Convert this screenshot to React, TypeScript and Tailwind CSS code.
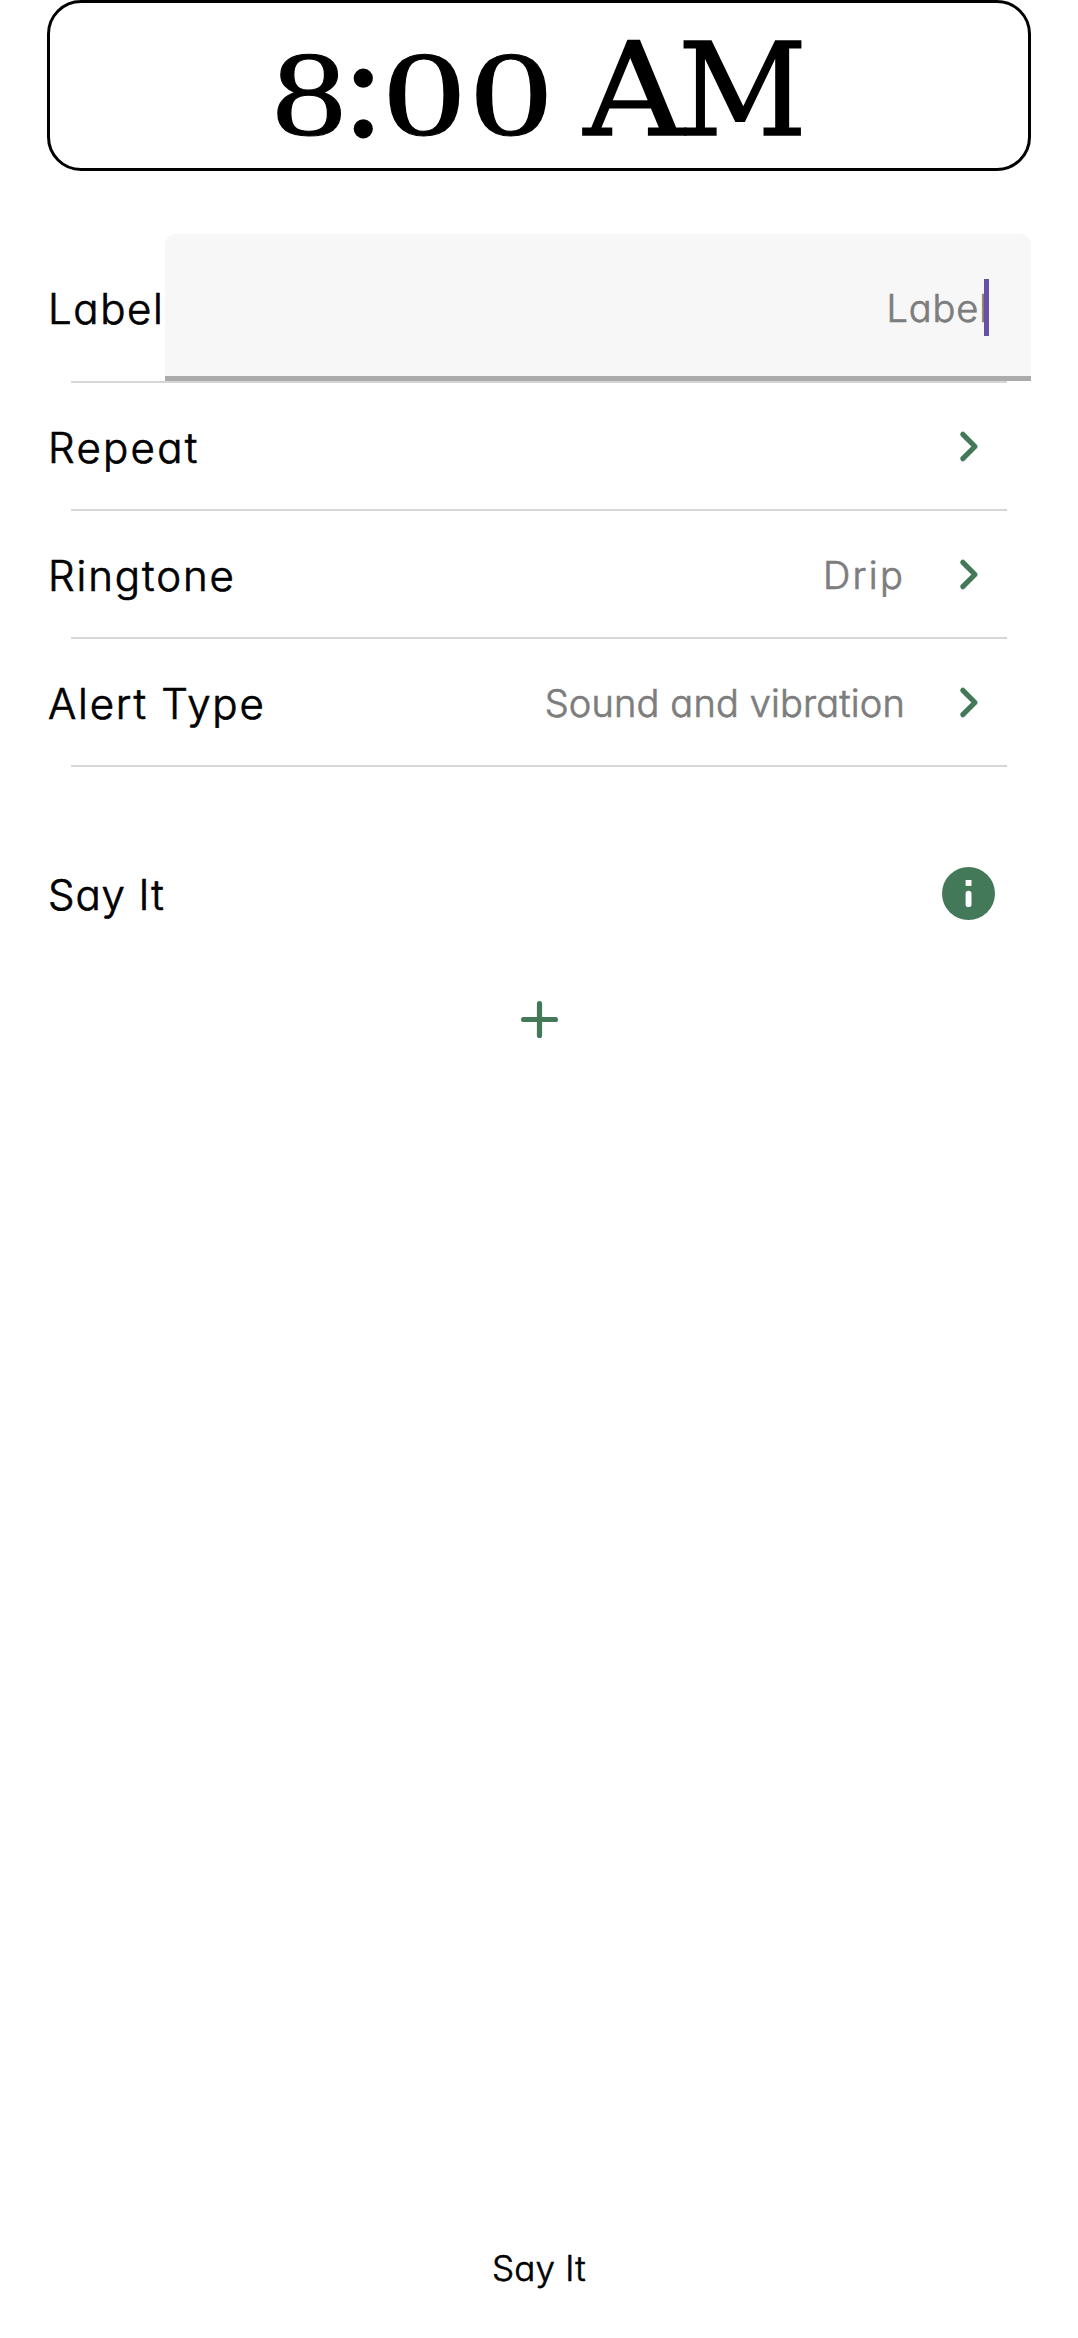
import React from "react";

const outfit = "font-[Inter,sans-serif] leading-none whitespace-nowrap font-light [font-feature-settings:'cv11','ss03']";
const labelText = `${outfit} text-[42px] text-black [-webkit-text-stroke:0.7px_black]`;
const valueText = `${outfit} text-[38px] text-[#7d7d7d] [-webkit-text-stroke:0.7px_#7d7d7d]`;

function Chevron() {
  return (
    <svg className="shrink-0" width="72" height="72" viewBox="0 0 72 72" fill="none" stroke="#437858" strokeWidth="5.2" strokeLinecap="round" strokeLinejoin="round">
      <path d="M30.8 24.3L43 36.5L30.8 48.7" />
    </svg>
  );
}

function Divider() {
  return <div className="mx-6 h-[2px] shrink-0 bg-[#d6d6d6]" />;
}

function Row({ name, spacing, value, valueSpacing = "" }: { name: string; spacing: string; value?: string; valueSpacing?: string }) {
  return (
    <div className="flex h-[128px] flex-col">
      <div className="flex flex-1 items-center pr-[27px] pl-[1px]">
        <span className={`${labelText} ${spacing} pt-[3px]`}>{name}</span>
        <span className={`${valueText} ${valueSpacing} mr-[27px] ml-auto pt-[2px]`}>{value}</span>
        <Chevron />
      </div>
      <Divider />
    </div>
  );
}

function Glyph({ cell, face, children }: { cell: string; face: string; children: string }) {
  return (
    <span className={`flex justify-center leading-[150px] ${cell}`}>
      <span className={`inline-block ${face}`}>{children}</span>
    </span>
  );
}

const digit = "font-['Liberation_Serif',serif] text-[121px] [-webkit-text-stroke:1px_black]";
const letter = "font-['DejaVu_Serif',serif] text-[130px] [-webkit-text-stroke:1.5px_black] [stroke-linejoin:round]";

export default function App() {
  return (
    <div className="flex h-[2338px] w-[1078px] flex-col bg-white px-[47px]">
      <div className="flex h-[171px] shrink-0 items-baseline rounded-[34px] border-3 border-black pt-[11px] pl-[227px] text-black">
        <Glyph cell="w-[65px]" face={`${digit} scale-x-[1.22]`}>8</Glyph>
        <Glyph cell="w-[43px]" face="font-['Liberation_Serif',serif] text-[138px] [-webkit-text-stroke:3px_black]">:</Glyph>
        <Glyph cell="w-[78px]" face={`${digit} scale-x-[1.34]`}>0</Glyph>
        <Glyph cell="w-[96px]" face={`${digit} scale-x-[1.34]`}>0</Glyph>
        <Glyph cell="w-[102px] ml-[24px]" face={`${letter} scale-x-[1.07]`}>A</Glyph>
        <Glyph cell="w-[115px]" face={`${letter} scale-x-[0.97]`}>M</Glyph>
      </div>

      <div className="mt-[63px] flex h-[147px] shrink-0">
        <div className="flex w-[118px] items-center pl-[1px]">
          <span className={`${labelText} pt-[2px] tracking-[1.6px]`}>Label</span>
        </div>
        <div className="flex flex-1 items-center justify-end rounded-t-[11px] border-b-[5px] border-[#ababab] bg-[#f7f7f7] pr-[42px]">
          <span className={`${valueText} pt-[5px] tracking-[0.9px]`}>Label</span>
          <span className="mt-[4px] -ml-[5px] h-[57px] w-[5px] bg-[#674fa3]" />
        </div>
      </div>
      <Divider />

      <Row name="Repeat" spacing="tracking-[2.3px]" />
      <Row name="Ringtone" spacing="tracking-[1.9px]" value="Drip" valueSpacing="tracking-[2.2px]" />
      <Row name="Alert Type" spacing="tracking-[1.8px]" value="Sound and vibration" valueSpacing="tracking-[0.15px]" />

      <div className="mt-[62px] flex h-[128px] shrink-0 items-center justify-between pr-[36px] pl-[1px]">
        <span className={`${labelText} pt-[3px] tracking-[0.9px]`}>Say It</span>
        <svg width="53" height="53" viewBox="0 0 53 53">
          <circle cx="26.5" cy="26.5" r="26.5" fill="#437858" />
          <rect x="23.6" y="13" width="5.9" height="5.9" fill="#fff" />
          <rect x="23.6" y="23.8" width="5.9" height="16.3" rx="2.9" fill="#fff" />
        </svg>
      </div>

      <div className="mt-[44px] flex justify-center">
        <svg width="37" height="37" viewBox="0 0 37 37" stroke="#437858" strokeWidth="5.2" strokeLinecap="round">
          <path d="M18.5 2.6V34.4M2.6 18.5H34.4" />
        </svg>
      </div>

      <div className={`${outfit} mt-auto mb-[52px] text-center text-[35px] tracking-[0.2px] text-black [-webkit-text-stroke:0.6px_black]`}>Say It</div>
    </div>
  );
}
